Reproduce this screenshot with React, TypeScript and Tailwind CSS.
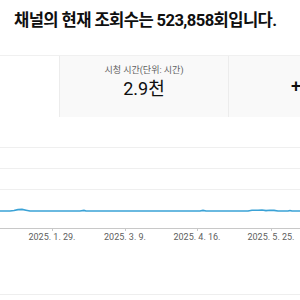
const ticks = [
  { x: 52, label: "2025. 1. 29." },
  { x: 125, label: "2025. 3. 9." },
  { x: 197, label: "2025. 4. 16." },
  { x: 271, label: "2025. 5. 25." },
];

// 평평한 조회수 라인 + 작은 봉우리들
const linePoints =
  "0,6 10,6 14,5.5 18,4.6 22,4.4 26,5.2 30,6 80,6 84,5.4 86,6 200,6 203,5.4 206,6 248,6 252,5.2 258,5.3 262,5 266,5.6 270,5.2 274,5.4 278,6 288,6 290,5.5 292,6 300,6";

export default function App() {
  return (
    <div
      className="w-[300px] h-[300px] overflow-hidden bg-white text-[#0f0f0f]"
      style={{ fontFamily: 'Roboto, "Noto Sans CJK KR", sans-serif' }}
    >
      <div className="h-[55px] pl-[14px] pt-[9px]">
        <h1 className="text-[16.6px] font-bold tracking-[-0.6px] whitespace-nowrap leading-[24px]">
          채널의 현재 조회수는 523,858회입니다.
        </h1>
      </div>

      <div className="flex h-[62px] border-t border-[#f0f0f0] w-[400px]">
        <div className="w-[59px] shrink-0 bg-white" />
        <div className="w-[169px] shrink-0 bg-[#f9f9f9] border-l border-[#ececec] flex flex-col items-center pt-[8px]">
          <div className="text-[9px] leading-[12px] text-[#606060]">시청 시간(단위: 시간)</div>
          <div className="text-[18px] leading-[24px] mt-[1px]">2.9천</div>
        </div>
        <div className="w-[172px] shrink-0 bg-[#f9f9f9] border-l border-[#ececec] flex pt-[18px] pl-[62px]">
          <span className="text-[18px] leading-[24px] font-medium">+</span>
        </div>
      </div>

      <div className="relative h-[178px] border-b border-[#eeeeee]">
        <div className="pt-[30px] flex flex-col">
          <div className="h-px bg-[#efefef]" />
          <div className="h-px bg-[#efefef] mt-[20px]" />
          <div className="h-px bg-[#efefef] mt-[20px]" />
        </div>
        <svg className="absolute left-0 top-[88px]" width="300" height="10" viewBox="0 0 300 10">
          <polyline points={linePoints} fill="none" stroke="#3aa2d6" strokeWidth="1.6" />
        </svg>
        <div className="absolute left-0 top-[111px] w-[300px] h-px bg-[#c8c8c8]" />
        {ticks.map((t) => (
          <div key={t.label} className="absolute top-[111px]" style={{ left: t.x }}>
            <div className="w-px h-[3px] bg-[#c8c8c8]" />
            <div className="absolute top-[3px] -translate-x-1/2 whitespace-nowrap text-[9px] leading-[12px] text-[#606060]">
              {t.label}
            </div>
          </div>
        ))}
      </div>
    </div>
  );
}
